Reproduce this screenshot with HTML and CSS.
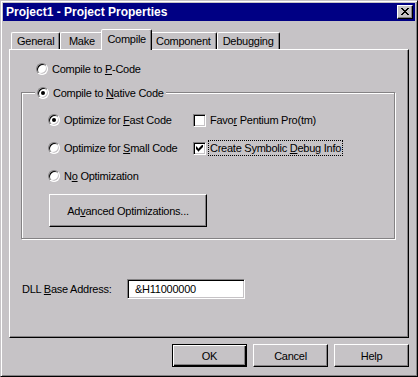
FILE: index.html
```html
<!DOCTYPE html>
<html lang="en">
<head>
    <meta charset="UTF-8">
    <meta name="viewport" content="width=device-width, initial-scale=1.0">
    <title>Project1 - Project Properties</title>
    <link rel="stylesheet" href="styles.css">
</head>
<body>
    <div class="window">
        <div class="titlebar">
            <span class="title">Project1 - Project Properties</span>
            <button class="close" aria-label="Close">
                <svg width="8" height="7" viewBox="0 0 8 7" shape-rendering="crispEdges">
                    <path d="M0 0h2v1H0zM6 0h2v1H6zM1 1h2v1H1zM5 1h2v1H5zM2 2h4v1H2zM3 3h2v1H3zM2 4h4v1H2zM1 5h2v1H1zM5 5h2v1H5zM0 6h2v1H0zM6 6h2v1H6z" fill="#000"/>
                </svg>
            </button>
        </div>

        <div class="client">
            <div class="tabs">
                <div class="tab">General</div>
                <div class="tab">Make</div>
                <div class="tab active">Compile</div>
                <div class="tab">Component</div>
                <div class="tab">Debugging</div>
            </div>

            <div class="panel">
                <label class="option pcode"><input type="radio" name="target"><span>Compile to <u>P</u>-Code</span></label>

                <div class="group">
                    <label class="option legend"><input type="radio" name="target" checked><span>Compile to <u>N</u>ative Code</span></label>
                    <div class="opts">
                        <label class="option"><input type="radio" name="opt" checked><span>Optimize for <u>F</u>ast Code</span></label>
                        <label class="option"><input type="checkbox"><span>Favo<u>r</u> Pentium Pro(tm)</span></label>
                        <label class="option"><input type="radio" name="opt"><span>Optimize for <u>S</u>mall Code</span></label>
                        <label class="option"><input type="checkbox" checked><span class="focus">Create Symbolic <u>D</u>ebug Info</span></label>
                        <label class="option"><input type="radio" name="opt"><span>N<u>o</u> Optimization</span></label>
                    </div>
                    <button class="btn advanced">Ad<u>v</u>anced Optimizations...</button>
                </div>

                <div class="field">
                    <label for="base">DLL <u>B</u>ase Address:</label>
                    <input id="base" class="textbox" type="text" value="&amp;H11000000">
                </div>
            </div>

            <div class="actions">
                <button class="btn default">OK</button>
                <button class="btn">Cancel</button>
                <button class="btn">Help</button>
            </div>
        </div>
    </div>
</body>
</html>
```

FILE: styles.css
```css
body {
    margin: 0;
    background-color: #c6c3c6;
    font-family: "Liberation Sans", Arial, sans-serif;
    font-size: 11px;
    letter-spacing: -0.25px;
    color: #000;
}
.window {
    box-sizing: border-box;
    width: 418px;
    height: 377px;
    padding: 2px;
    border: 1px solid;
    border-color: #c6c3c6 #000 #000 #c6c3c6;
    box-shadow: inset 1px 1px #fff, inset -1px -1px #848284;
}
.titlebar {
    display: flex;
    align-items: center;
    justify-content: space-between;
    height: 18px;
    padding: 0 2px 0 3px;
    background-color: #000084;
    color: #fff;
}
.title {
    font-size: 12px;
    font-weight: bold;
    letter-spacing: 0;
}
.close {
    display: flex;
    align-items: center;
    justify-content: center;
    box-sizing: border-box;
    width: 16px;
    height: 14px;
    padding: 0 1px 1px 0;
    background-color: #c6c3c6;
    border: 1px solid;
    border-color: #fff #000 #000 #fff;
    box-shadow: inset -1px -1px #848284;
}
.client {
    padding: 0 6px;
}
.tabs {
    display: flex;
    align-items: flex-end;
    height: 20px;
    margin-top: 8px;
    padding-left: 2px;
}
.tab {
    display: flex;
    align-items: center;
    justify-content: center;
    box-sizing: border-box;
    min-width: 43px;
    height: 17px;
    padding: 0 5px;
    border: 1px solid;
    border-bottom: 0;
    border-color: #fff #000 transparent #fff;
    border-radius: 2px 2px 0 0;
    box-shadow: inset -1px 0 #848284;
}
.tab.active {
    position: relative;
    z-index: 1;
    height: 21px;
    margin: 0 -2px -1px;
    padding-bottom: 2px;
    background-color: #c6c3c6;
}
.panel {
    box-sizing: border-box;
    height: 289px;
    padding: 11px 13px 0 11px;
    border: 1px solid;
    border-color: #fff #000 #000 #fff;
    box-shadow: inset -1px -1px #848284;
}
.option {
    display: flex;
    align-items: center;
    gap: 4px;
    height: 16px;
}
.pcode {
    margin-left: 15px;
}
.group {
    margin-top: 15px;
    padding-bottom: 11px;
    border: 1px solid #848284;
    box-shadow: 1px 1px #fff, inset 1px 1px #fff;
}
.legend {
    width: fit-content;
    margin: -8px 0 0 13px;
    padding: 0 2px;
    background-color: #c6c3c6;
}
.opts {
    display: grid;
    grid-template-columns: 145px auto;
    grid-auto-rows: 16px;
    row-gap: 12px;
    margin: 11px 0 0 26px;
}
input[type="radio"] {
    appearance: none;
    display: grid;
    place-items: center;
    flex: none;
    box-sizing: border-box;
    width: 12px;
    height: 12px;
    margin: 0;
    border: 1px solid;
    border-color: #848284 #fff #fff #848284;
    border-radius: 50%;
    box-shadow: inset 1px 1px #000, inset -1px -1px #c6c3c6;
    background-color: #fff;
}
input[type="radio"]:checked::after {
    content: "";
    width: 4px;
    height: 4px;
    border-radius: 50%;
    background-color: #000;
}
input[type="checkbox"] {
    appearance: none;
    flex: none;
    box-sizing: border-box;
    width: 13px;
    height: 13px;
    margin: 0;
    border: 1px solid;
    border-color: #848284 #fff #fff #848284;
    box-shadow: inset 1px 1px #000, inset -1px -1px #c6c3c6;
    background-color: #fff;
}
input[type="checkbox"]:checked::after {
    content: "";
    display: block;
    width: 7px;
    height: 7px;
    margin: 2px;
    background-color: #000;
    clip-path: polygon(0 2px, 1px 2px, 1px 3px, 2px 3px, 2px 4px, 3px 4px, 3px 3px, 4px 3px, 4px 2px, 5px 2px, 5px 1px, 6px 1px, 6px 0, 7px 0, 7px 3px, 6px 3px, 6px 4px, 5px 4px, 5px 5px, 4px 5px, 4px 6px, 3px 6px, 3px 7px, 2px 7px, 2px 6px, 1px 6px, 1px 5px, 0 5px);
}
.focus {
    margin-left: -1px;
    padding: 0 1px;
    line-height: 14px;
    outline: 1px dotted #000;
}
.btn {
    box-sizing: border-box;
    width: 75px;
    height: 23px;
    padding: 0;
    font: inherit;
    letter-spacing: inherit;
    color: #000;
    background-color: #c6c3c6;
    border: 1px solid;
    border-color: #fff #000 #000 #fff;
    box-shadow: inset -1px -1px #848284;
}
.btn.default {
    border-color: #000;
    box-shadow: inset 1px 1px #fff, inset -1px -1px #000, inset -2px -2px #848284;
}
.advanced {
    display: block;
    width: 158px;
    height: 33px;
    margin: 10px 0 0 27px;
}
.field {
    display: flex;
    align-items: center;
    margin: 40px 0 0 1px;
}
.field label {
    flex: none;
    width: 105px;
}
.textbox {
    box-sizing: border-box;
    width: 118px;
    height: 20px;
    margin: 0;
    padding: 0 0 0 7px;
    font: inherit;
    letter-spacing: inherit;
    color: #000;
    background-color: #fff;
    border: 1px solid;
    border-color: #848284 #fff #fff #848284;
    box-shadow: inset 1px 1px #000, inset -1px -1px #c6c3c6;
    outline: none;
}
.actions {
    display: flex;
    justify-content: flex-end;
    gap: 6px;
    margin-top: 6px;
}
```
